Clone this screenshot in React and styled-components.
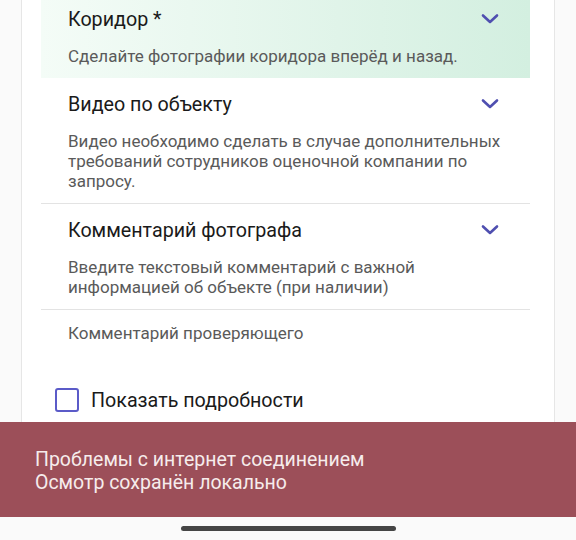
import styled, { createGlobalStyle } from "styled-components";

const GlobalStyle = createGlobalStyle`
  html, body {
    margin: 0;
    padding: 0;
    background: #fafafa;
    font-family: Roboto, "Noto Sans", sans-serif;
  }
`;

const Screen = styled.div`
  width: 576px;
  height: 540px;
  display: flex;
  flex-direction: column;
  overflow: hidden;
  background: #fafafa;
`;

const Content = styled.div`
  flex: 1;
  overflow: hidden;
  padding: 0 21px;
`;

const Card = styled.div`
  background: #fff;
  border-left: 1px solid #e6e6e6;
  border-right: 1px solid #e6e6e6;
  padding: 0 24px 40px 19px;
  height: 100%;
`;

const Section = styled.div`
  padding: ${(p) => (p.$first ? "5px" : "12px")} 27px 12px 27px;
  background: ${(p) =>
    p.$active ? "linear-gradient(90deg, #f4fcf7 0%, #d3efe0 100%)" : "transparent"};
  border-bottom: ${(p) => (p.$divider ? "1px solid #e3e3e3" : "none")};
`;

const Header = styled.div`
  display: flex;
  align-items: center;
  justify-content: space-between;
  height: 28px;
`;

const Title = styled.div`
  font-size: 19.7px;
  color: #1a1a1a;
`;

const Chevron = styled.svg`
  width: 18px;
  height: 12px;
  margin-right: 4px;
`;

const Desc = styled.div`
  margin-top: 13px;
  font-size: 17px;
  line-height: 20px;
  color: #5a5a5a;
  max-width: ${(p) => p.$max || "none"};
`;

const Plain = styled.div`
  padding: 13px 27px 0;
  font-size: 17px;
  line-height: 20px;
  color: #5a5a5a;
`;

const CheckRow = styled.label`
  display: flex;
  align-items: center;
  gap: 12px;
  margin: 45px 0 0 14px;
`;

const Box = styled.span`
  width: 24px;
  height: 24px;
  border: 2.5px solid #5b5bc8;
  border-radius: 3px;
  box-sizing: border-box;
`;

const CheckLabel = styled.span`
  font-size: 19.7px;
  color: #1a1a1a;
`;

const Snackbar = styled.div`
  height: 95px;
  background: #9c4f59;
  color: #f6ecec;
  font-size: 19.5px;
  line-height: 23px;
  padding: 26px 35px 0;
  box-sizing: border-box;
`;

const BottomArea = styled.div`
  height: 23px;
  display: flex;
  justify-content: center;
  align-items: center;
  background: #fafafa;
`;

const HomeBar = styled.div`
  width: 215px;
  height: 5px;
  border-radius: 3px;
  background: #454545;
`;

const ChevronIcon = () => (
  <Chevron viewBox="0 0 18 12">
    <path d="M2 2.5 L9 9 L16 2.5" fill="none" stroke="#4f4fb0" strokeWidth="2.6" strokeLinecap="round" strokeLinejoin="round" />
  </Chevron>
);

const items = [
  { title: "Коридор *", desc: "Сделайте фотографии коридора вперёд и назад.", active: true, first: true },
  {
    title: "Видео по объекту",
    desc: "Видео необходимо сделать в случае дополнительных требований сотрудников оценочной компании по запросу.",
    divider: true,
  },
  {
    title: "Комментарий фотографа",
    desc: "Введите текстовый комментарий с важной информацией об объекте (при наличии)",
    divider: true,
    max: "360px",
  },
];

export default function App() {
  return (
    <Screen>
      <GlobalStyle />
      <Content>
        <Card>
          {items.map((it) => (
            <Section key={it.title} $active={it.active} $first={it.first} $divider={it.divider}>
              <Header>
                <Title>{it.title}</Title>
                <ChevronIcon />
              </Header>
              <Desc $max={it.max}>{it.desc}</Desc>
            </Section>
          ))}
          <Plain>Комментарий проверяющего</Plain>
          <CheckRow>
            <Box />
            <CheckLabel>Показать подробности</CheckLabel>
          </CheckRow>
        </Card>
      </Content>
      <Snackbar>
        Проблемы с интернет соединением
        <br />
        Осмотр сохранён локально
      </Snackbar>
      <BottomArea>
        <HomeBar />
      </BottomArea>
    </Screen>
  );
}
